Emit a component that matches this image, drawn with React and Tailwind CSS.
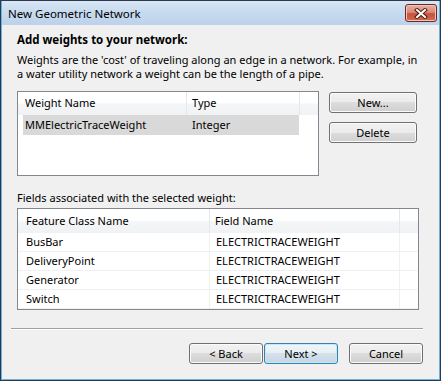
const rows = [
  ['BusBar', 'ELECTRICTRACEWEIGHT'],
  ['DeliveryPoint', 'ELECTRICTRACEWEIGHT'],
  ['Generator', 'ELECTRICTRACEWEIGHT'],
  ['Switch', 'ELECTRICTRACEWEIGHT'],
];

function WinButton({ children, primary, className = '' }) {
  return (
    <button
      className={`h-[21px] rounded-[3px] border text-[11px] leading-none text-black flex items-center justify-center ${
        primary
          ? 'border-[#3c7fb1] shadow-[inset_0_0_0_1px_#bfeafc] bg-[linear-gradient(to_bottom,#f0f6fa_0%,#e6eff5_50%,#d4e2ec_50%,#c6d6e2_100%)]'
          : 'border-[#707070] shadow-[inset_0_0_0_1px_#fbfbfb] bg-[linear-gradient(to_bottom,#f2f2f2_0%,#ebebeb_50%,#dddddd_50%,#cfcfcf_100%)]'
      } ${className}`}
    >
      {children}
    </button>
  );
}

const headerBg =
  'bg-[linear-gradient(to_bottom,#ffffff_0%,#ffffff_45%,#f4f5f7_55%,#f1f2f4_100%)]';

export default function App() {
  return (
    <div className="w-[441px] h-[381px] border border-[#2a3b50] flex flex-col font-['Noto_Sans',sans-serif] text-[11px] text-black select-none">
      <div className="flex-1 flex flex-col border-x border-b border-[#6cb0dc]">
        {/* Title bar */}
        <div className="h-[24px] flex items-start bg-[linear-gradient(to_bottom,#d9e6f4_0%,#c9dcf0_40%,#bcd2ea_100%)]">
          <span className="pl-[6px] pt-[5px] leading-[15px] text-[11.5px] text-black">New Geometric Network</span>
          <div className="ml-auto mr-[2px] mt-[3px] w-[32px] h-[18px] rounded-[3px] border border-[#6b2a20] bg-[linear-gradient(to_bottom,#e9b1a4_0%,#d98a78_45%,#c8513d_55%,#d26a52_100%)] shadow-[inset_0_0_0_1px_#f0c5ba] flex items-center justify-center">
            <svg width="14" height="11" viewBox="0 0 14 11">
              <path d="M3 2 L11 9 M11 2 L3 9" stroke="#4a1d15" strokeWidth="4" strokeLinecap="square" />
              <path d="M3 2 L11 9 M11 2 L3 9" stroke="#ffffff" strokeWidth="2" strokeLinecap="square" />
            </svg>
          </div>
        </div>

        {/* Client area */}
        <div className="flex-1 bg-[#f0f0f0] pl-[15px] pr-[16px] pt-[7px] flex flex-col">
          <div className="font-bold leading-[15px] text-[11.5px]">Add weights to your network:</div>
          <p className="mt-[6px] leading-[14px] whitespace-nowrap">
            Weights are the 'cost' of traveling along an edge in a network. For example, in
            <br />
            a water utility network a weight can be the length of a pipe.
          </p>

          <div className="mt-[10px] flex items-start">
            <div className="w-[302px] h-[85px] border border-[#828790] bg-white">
              <div className={`flex h-[23px] ${headerBg}`}>
                <div className="w-[169px] border-r border-[#e3e8ee] pl-[7px] flex items-center">Weight Name</div>
                <div className="w-[113px] border-r border-[#e3e8ee] pl-[5px] flex items-center">Type</div>
                <div className="flex-1" />
              </div>
              <div className="ml-[5px] w-[276px] h-[20px] bg-[#d9d9d9] flex items-center">
                <div className="w-[164px] pl-[2px]">MMElectricTraceWeight</div>
                <div className="pl-[5px]">Integer</div>
              </div>
            </div>
            <div className="ml-[10px] flex flex-col">
              <WinButton className="mt-[1px] w-[88px]">New...</WinButton>
              <WinButton className="mt-[9px] w-[88px]">Delete</WinButton>
            </div>
          </div>

          <div className="mt-[15px] leading-[14px]">Fields associated with the selected weight:</div>

          <div className="mt-[3px] w-[402px] h-[102px] border border-[#828790] bg-white">
            <div className={`flex h-[24px] ${headerBg}`}>
              <div className="w-[192px] border-r border-[#e3e8ee] pl-[8px] flex items-center">Feature Class Name</div>
              <div className="w-[190px] border-r border-[#e3e8ee] pl-[5px] flex items-center">Field Name</div>
              <div className="flex-1" />
            </div>
            {rows.map(([name, field]) => (
              <div key={name} className="flex h-[19px] border-b border-[#f0f0f0]">
                <div className="w-[192px] border-r border-[#f0f0f0] pl-[8px] flex items-center">{name}</div>
                <div className="w-[190px] border-r border-[#f0f0f0] pl-[6px] flex items-center">{field}</div>
                <div className="flex-1" />
              </div>
            ))}
          </div>

          <div className="mt-[18px] -ml-[6px] border-t border-[#a0a0a0] border-b border-b-white" />

          <div className="mt-[13px] flex justify-end">
            <WinButton className="w-[74px]">&lt; Back</WinButton>
            <WinButton primary className="ml-[1px] w-[74px]">Next &gt;</WinButton>
            <WinButton className="ml-[11px] w-[74px]">Cancel</WinButton>
          </div>
        </div>
      </div>
    </div>
  );
}
